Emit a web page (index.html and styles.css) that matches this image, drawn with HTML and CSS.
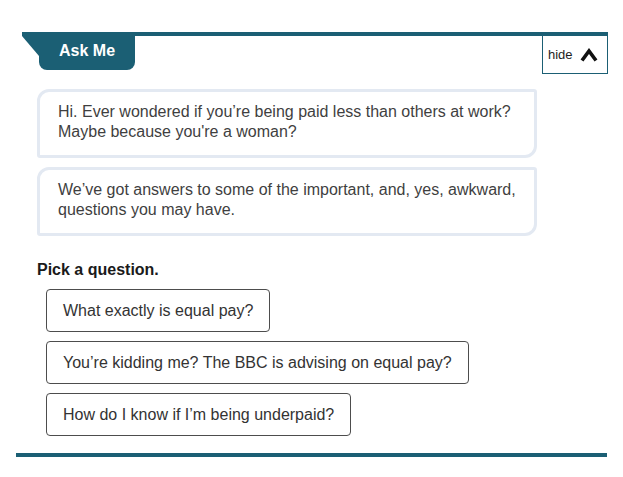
FILE: index.html
```html
<!DOCTYPE html>
<html lang="en">
<head>
<meta charset="utf-8">
<title>Ask Me</title>
<link rel="stylesheet" href="styles.css">
</head>
<body>
<div class="widget">
  <div class="header">
    <div class="tab">
      <span class="fold"></span>
      <span class="tab-label">Ask Me</span>
    </div>
    <button class="hide-btn" type="button">
      <span class="hide-text">hide</span>
      <svg class="chevron" width="18" height="14" viewBox="0 0 18 14" aria-hidden="true">
        <polyline points="2,12.5 9,3 16,12.5" fill="none" stroke="#111" stroke-width="3.6" stroke-linejoin="miter" stroke-linecap="butt"/>
      </svg>
    </button>
  </div>
  <div class="content">
    <div class="bubble">Hi. Ever wondered if you’re being paid less than others at work?<br>Maybe because you're a woman?</div>
    <div class="bubble">We’ve got answers to some of the important, and, yes, awkward,<br>questions you may have.</div>
    <div class="pick">Pick a question.</div>
    <div class="questions">
      <button class="question" type="button">What exactly is equal pay?</button>
      <button class="question" type="button">You’re kidding me? The BBC is advising on equal pay?</button>
      <button class="question" type="button">How do I know if I’m being underpaid?</button>
    </div>
  </div>
  <div class="footer-bar"></div>
</div>
</body>
</html>
```

FILE: styles.css
```css
* {
  box-sizing: border-box;
}

body {
  margin: 0;
  background: #ffffff;
  font-family: "Liberation Sans", Arial, sans-serif;
  color: #3d3d3d;
}

.widget {
  width: 591px;
  margin: 0 16px;
  padding-top: 32px;
}

.header {
  display: flex;
  justify-content: space-between;
  align-items: flex-start;
  margin-left: 6px;
  margin-right: -1px;
  border-top: 4px solid #1b5f74;
}

.tab {
  display: flex;
  align-items: flex-start;
}

.fold {
  width: 0;
  height: 0;
  border-top: 20px solid #1b5f74;
  border-left: 17px solid transparent;
}

.tab-label {
  display: block;
  width: 96px;
  height: 34px;
  padding: 5px 0 0 20px;
  background: #1b5f74;
  color: #ffffff;
  font-weight: bold;
  font-size: 16px;
  line-height: 20px;
  border-radius: 0 0 8px 8px;
}

.hide-btn {
  display: flex;
  align-items: center;
  width: 66px;
  height: 38px;
  margin: 0;
  padding: 0 0 0 5px;
  background: #ffffff;
  border: 1px solid #1b5f74;
  border-top: none;
  font-family: "Liberation Sans", Arial, sans-serif;
  font-size: 13px;
  color: #1e1e1e;
  cursor: pointer;
}

.hide-text {
  line-height: 16px;
}

.chevron {
  display: block;
  margin-left: 7px;
  margin-top: 1px;
}

.content {
  padding-left: 21px;
  padding-top: 15px;
}

.bubble {
  width: 500px;
  padding: 10px 8px 13px 18px;
  border: 3px solid #e3e9f2;
  border-radius: 12px 3px 12px 3px;
  font-size: 16px;
  line-height: 20px;
  color: #3f3f3f;
  white-space: nowrap;
}

.bubble + .bubble {
  margin-top: 9px;
}

.pick {
  margin-top: 24px;
  font-size: 16px;
  line-height: 20px;
  font-weight: bold;
  color: #1a1a1a;
}

.questions {
  display: flex;
  flex-direction: column;
  align-items: flex-start;
  gap: 9px;
  margin-top: 9px;
  margin-left: 9px;
}

.question {
  height: 43px;
  margin: 0;
  padding: 0 16px;
  background: #ffffff;
  border: 1px solid #4d4d4d;
  border-radius: 4px;
  font-family: "Liberation Sans", Arial, sans-serif;
  font-size: 16px;
  line-height: 20px;
  color: #333333;
  text-align: left;
  cursor: pointer;
}

.footer-bar {
  margin-top: 17px;
  height: 4px;
  background: #1b5f74;
}
```
